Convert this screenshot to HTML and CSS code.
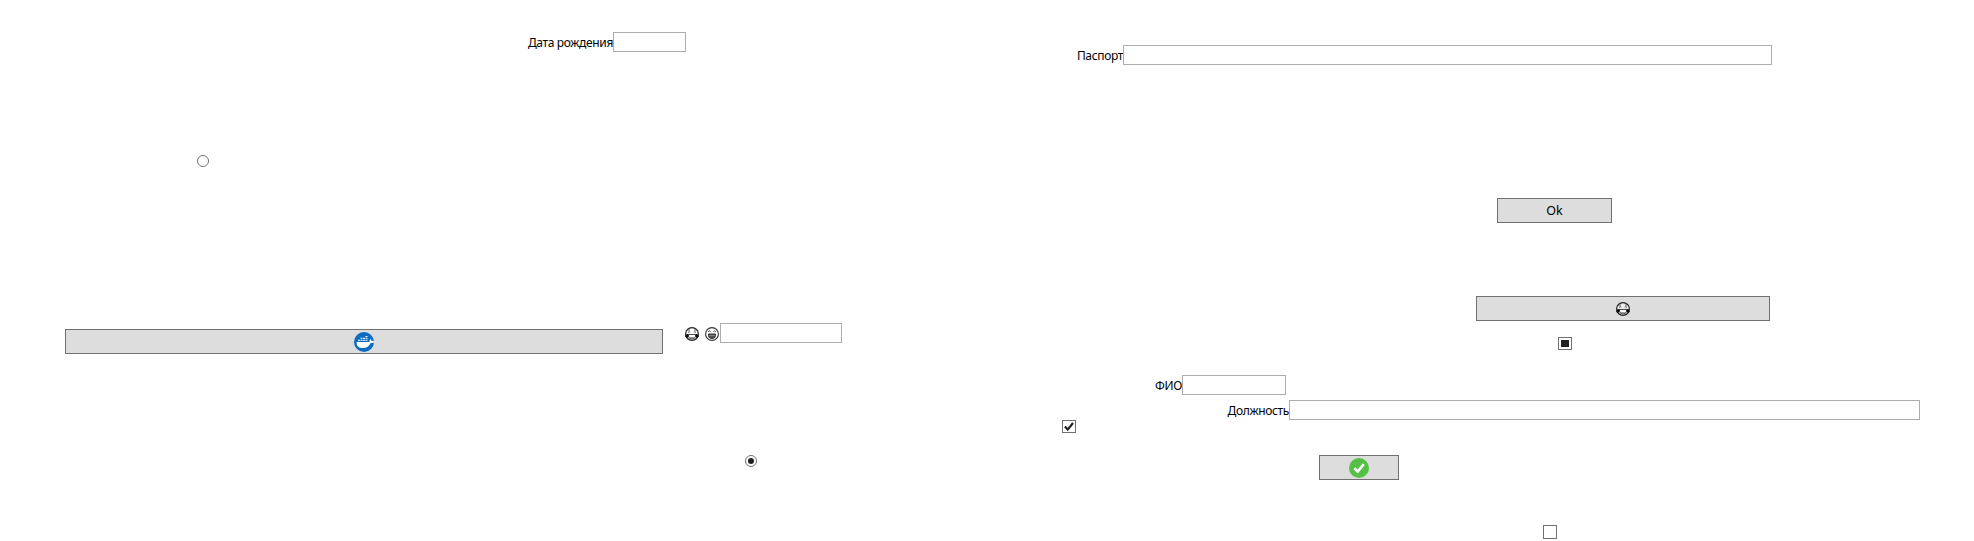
FILE: index.html
```html
<!DOCTYPE html>
<html lang="ru">
<head>
<meta charset="utf-8">
<title>Form</title>
<link rel="stylesheet" href="styles.css">
</head>
<body>
<svg class="defs" aria-hidden="true">
  <symbol id="joy" viewBox="0 0 14 14">
    <circle cx="7" cy="7" r="6.4" fill="#fff" fill-opacity=".5" stroke="#222" stroke-width="1.2"/>
    <path d="M3 5.500q1-1.500 2.300-.3M8.700 5.200q1.300-1.200 2.300.3M3.500 3.500l1.500-.7M9 2.800l1.500.7" fill="none" stroke="#333" stroke-width=".8"/>
    <path d="M3.500 7.500h7v1.500a3.500 3 0 0 1-7 0z" fill="#fff" stroke="#333" stroke-width=".9"/>
    <path d="M4.400 10.300h5.200L7 12z" fill="#777"/>
    <path d="M.2 9Q.7 7.200 3.300 6.800 4.100 10.400 2.200 10.800.4 10.600.2 9zM13.800 9q-.5-1.800-3.100-2.200-.8 3.600 1.100 4 1.800-.2 2-1.800z" fill="#0a0a0a"/>
  </symbol>
  <symbol id="grin" viewBox="0 0 14 14">
    <circle cx="7" cy="7" r="6.4" fill="#fff" stroke="#333" stroke-width="1.1"/>
    <path d="M3.200 4.800q1.200-1.800 2.500 0M8.300 4.800q1.300-1.800 2.500 0" fill="none" stroke="#222" stroke-width=".9"/>
    <path d="M3.500 7h7v1.500a3.500 3 0 0 1-7 0z" fill="#555" stroke="#222" stroke-width=".9"/>
    <path d="M4 8.500h6" stroke="#bbb" stroke-width=".5"/>
  </symbol>
</svg>
<main class="canvas">
  <label class="item field birth"><span>Дата рождения</span><input type="text"></label>
  <label class="item field passport"><span>Паспорт</span><input type="text"></label>
  <span class="item radio radio-off"></span>
  <button class="item button ok">Ok</button>
  <button class="item button docker">
    <svg width="20" height="20" viewBox="0 0 20 20"><circle cx="10" cy="10" r="10" fill="#0a6dc2"/><path d="M2.500 10h13q-.3-2 .8-3 1.300.8 1.500 2 1.200-.1 2.200.2v1.300q-1.500.6-3.500.5-1.600 5-8 5-6 0-6-6z" fill="#fff"/><path d="M4 8.300h2M6.500 8.300h2M9 8.300h2M11.500 8.300h2M6.500 6.300h2M9 6.300h2M11.500 6.300h2M11.500 4.500h2" stroke="#fff" stroke-width="1"/></svg>
  </button>
  <label class="item field smile"><span class="faces"><svg class="face"><use href="#joy"/></svg><svg class="face"><use href="#grin"/></svg></span><input type="text"></label>
  <button class="item button laugh"><svg class="face"><use href="#joy"/></svg></button>
  <span class="item check mixed"></span>
  <label class="item field name"><span>ФИО</span><input type="text"></label>
  <label class="item field job"><span>Должность</span><input type="text"></label>
  <span class="item check checked"><svg width="12" height="11" viewBox="0 0 12 11"><path d="M1.900 5.500 4.700 8.600 10 2" fill="none" stroke="#212121" stroke-width="2.200"/></svg></span>
  <button class="item button accept">
    <svg width="20" height="20" viewBox="0 0 20 20"><circle cx="10" cy="10" r="10" fill="#54c045"/><path d="M5.300 10.300 8.700 13.500 14.700 6.200" fill="none" stroke="#fff" stroke-width="2.600"/></svg>
  </button>
  <span class="item radio radio-on"></span>
  <span class="item check empty"></span>
</main>
</body>
</html>
```
FILE: styles.css
```css
* { box-sizing: border-box; }
body { margin: 0; background: #fff; color: #000; font: 12px/16px "Noto Sans", "Open Sans", sans-serif; }
.defs { position: absolute; width: 0; height: 0; }
.canvas { position: relative; width: 1974px; height: 541px; overflow: hidden; }
.item { position: absolute; }

.field { display: flex; justify-content: flex-end; height: 20px; white-space: nowrap; letter-spacing: -.35px; }
.field span { padding-top: 3px; }
.field input { height: 20px; margin: 0; padding: 0; border: 1px solid #abadb3; background: #fff; outline: 0; }
.button { display: flex; align-items: center; justify-content: center; height: 25px; margin: 0; padding: 0; border: 1px solid #707070; background: #ddd; color: #000; font: inherit; }
.face { display: block; width: 14px; height: 14px; }
.field .faces { display: flex; gap: 6px; margin-right: 1px; padding-top: 4px; }
.radio { display: flex; align-items: center; justify-content: center; width: 12px; height: 12px; border: 1px solid #707070; border-radius: 50%; }
.radio-on::after { content: ""; width: 6px; height: 6px; border-radius: 50%; background: #212121; }
.check { display: flex; align-items: center; justify-content: center; width: 14px; height: 13px; border: 1px solid #707070; }

.birth { right: 1288px; top: 32px; }
.birth input { width: 73px; }
.passport { right: 202px; top: 45px; }
.passport input { width: 649px; }
.radio-off { left: 197px; top: 155px; }
.ok { left: 1497px; top: 198px; width: 115px; font-size: 12.5px; }
.docker { left: 65px; top: 329px; width: 598px; }
.smile { left: 685px; top: 323px; }
.smile input { width: 122px; }
.laugh { left: 1476px; top: 296px; width: 294px; }
.mixed { left: 1558px; top: 337px; }
.mixed::after { content: ""; width: 8px; height: 7px; background: #212121; }
.name { right: 688px; top: 375px; }
.name input { width: 104px; }
.job { right: 54px; top: 400px; }
.job input { width: 631px; }
.checked { left: 1062px; top: 420px; }
.accept { left: 1319px; top: 455px; width: 80px; }
.radio-on { left: 745px; top: 455px; }
.empty { left: 1543px; top: 525px; height: 14px; }
```
